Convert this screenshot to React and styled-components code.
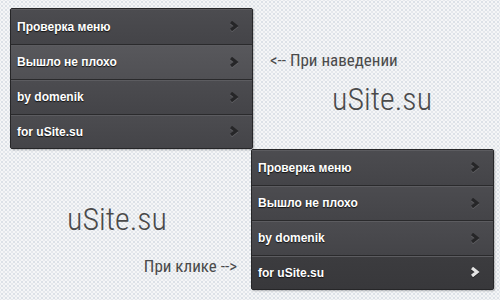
import React from 'react';
import styled, { createGlobalStyle } from 'styled-components';

const GlobalStyle = createGlobalStyle`
  html, body {
    margin: 0;
    padding: 0;
  }
  body {
    width: 500px;
    height: 300px;
    overflow: hidden;
    background-color: #f5f6f7;
    background-image:
      radial-gradient(circle, #dce1e7 0.8px, transparent 1.2px),
      radial-gradient(circle, #e5e8ec 0.8px, transparent 1.2px);
    background-size: 4px 4px, 4px 4px;
    background-position: 0 0, 2px 2px;
    font-family: "Liberation Sans", Arial, sans-serif;
  }
`;

const Page = styled.div`
  display: flex;
  flex-direction: column;
  width: 500px;
  height: 300px;
`;

const TopRow = styled.div`
  display: flex;
  padding: 8px 0 0 10px;
`;

const BottomRow = styled.div`
  display: flex;
`;

const Menu = styled.ul`
  list-style: none;
  margin: 0;
  padding: 0;
  width: 241px;
  border: 1px solid #262628;
  border-radius: 2px;
  background: #46464a;
  box-shadow: 1px 1px 2px rgba(0, 0, 0, 0.25);
  overflow: hidden;
`;

const Item = styled.li`
  display: flex;
  align-items: center;
  justify-content: space-between;
  height: 35px;
  box-sizing: border-box;
  padding: 0 12px 0 6px;
  color: #fff;
  font-family: "Liberation Sans", Arial, sans-serif;
  font-weight: bold;
  font-size: 12px;
  text-shadow: 0 1px 1px #111;
  border-top: 1px solid #2a2a2c;
  box-shadow: inset 0 1px 0 #5c5c60;
  background: ${p =>
    p.state === 'hover'
      ? 'linear-gradient(#58585c, #505054)'
      : p.state === 'active'
      ? 'linear-gradient(#3c3c3f, #38383b)'
      : 'linear-gradient(#4c4c50, #444448)'};
  &:first-child {
    border-top: none;
  }
  &:last-child {
    height: 34px;
  }
`;

const Chevron = ({ light }) => (
  <svg width="11" height="13" viewBox="0 0 11 13">
    <polyline
      points="2,2 7,6 2,10"
      fill="none"
      stroke={light ? '#111' : '#66666a'}
      strokeWidth="3.2"
      transform="translate(0,1)"
      opacity={light ? 0.6 : 0.8}
    />
    <polyline
      points="2,2 7,6 2,10"
      fill="none"
      stroke={light ? '#e4e4e4' : '#262628'}
      strokeWidth="3.2"
    />
  </svg>
);

const SideTop = styled.div`
  display: flex;
  flex-direction: column;
  padding: 42px 0 0 17px;
`;

const SideBottom = styled.div`
  display: flex;
  flex-direction: column;
  align-items: flex-end;
  width: 251px;
  box-sizing: border-box;
  padding: 52px 14px 0 0;
`;

const Note = styled.div`
  font-family: "Liberation Sans Narrow", "Roboto Condensed", "DejaVu Sans Condensed", sans-serif;
  font-size: 17px;
  color: #4a4a4a;
  line-height: 20px;
  margin-top: ${p => p.gap || 0}px;
`;

const Logo = styled.div`
  font-family: "Liberation Sans Narrow", "Roboto Condensed", "DejaVu Sans Condensed", sans-serif;
  font-size: 32px;
  font-weight: 300;
  color: #4a4a4a;
  line-height: 36px;
  margin: ${p => p.m};
`;

const items = ['Проверка меню', 'Вышло не плохо', 'by domenik', 'for uSite.su'];

const DropMenu = ({ hover, active }) => (
  <Menu>
    {items.map((t, i) => (
      <Item key={t} state={i === hover ? 'hover' : i === active ? 'active' : 'normal'}>
        <span>{t}</span>
        <Chevron light={i === active} />
      </Item>
    ))}
  </Menu>
);

export default function App() {
  return (
    <>
      <GlobalStyle />
      <Page>
        <TopRow>
          <DropMenu hover={1} />
          <SideTop>
            <Note>&lt;-- При наведении</Note>
            <Logo m="11px 0 0 62px">uSite.su</Logo>
          </SideTop>
        </TopRow>
        <BottomRow>
          <SideBottom>
            <Logo m="0 70px 0 0">uSite.su</Logo>
            <Note gap={19}>При клике --&gt;</Note>
          </SideBottom>
          <DropMenu active={3} />
        </BottomRow>
      </Page>
    </>
  );
}
